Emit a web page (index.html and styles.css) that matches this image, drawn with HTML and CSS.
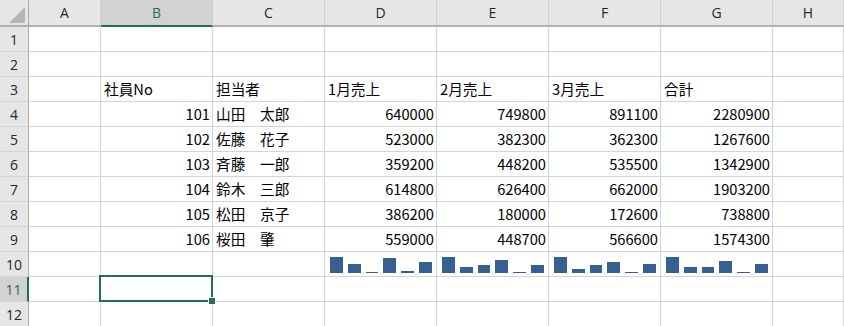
FILE: index.html
```html
<!DOCTYPE html>
<html lang="ja">
<head>
<meta charset="utf-8">
<title>Sheet</title>
<link rel="stylesheet" href="styles.css">
</head>
<body>
<div class="sheet">
  <div class="corner"><svg width="28" height="25" viewBox="0 0 28 25"><polygon points="25,7 25,23 9,23" fill="#b4b4b4"/></svg></div>
  <div class="ch">A</div><div class="ch ch-sel">B</div><div class="ch">C</div><div class="ch">D</div><div class="ch">E</div><div class="ch">F</div><div class="ch">G</div><div class="ch">H</div>

  <div class="rh">1</div><div class="c"></div><div class="c"></div><div class="c"></div><div class="c"></div><div class="c"></div><div class="c"></div><div class="c"></div><div class="c"></div>
  <div class="rh">2</div><div class="c"></div><div class="c"></div><div class="c"></div><div class="c"></div><div class="c"></div><div class="c"></div><div class="c"></div><div class="c"></div>
  <div class="rh">3</div><div class="c"></div><div class="c">社員No</div><div class="c">担当者</div><div class="c">1月売上</div><div class="c">2月売上</div><div class="c">3月売上</div><div class="c">合計</div><div class="c"></div>
  <div class="rh">4</div><div class="c"></div><div class="c num">101</div><div class="c">山田　太郎</div><div class="c num">640000</div><div class="c num">749800</div><div class="c num">891100</div><div class="c num">2280900</div><div class="c"></div>
  <div class="rh">5</div><div class="c"></div><div class="c num">102</div><div class="c">佐藤　花子</div><div class="c num">523000</div><div class="c num">382300</div><div class="c num">362300</div><div class="c num">1267600</div><div class="c"></div>
  <div class="rh">6</div><div class="c"></div><div class="c num">103</div><div class="c">斉藤　一郎</div><div class="c num">359200</div><div class="c num">448200</div><div class="c num">535500</div><div class="c num">1342900</div><div class="c"></div>
  <div class="rh">7</div><div class="c"></div><div class="c num">104</div><div class="c">鈴木　三郎</div><div class="c num">614800</div><div class="c num">626400</div><div class="c num">662000</div><div class="c num">1903200</div><div class="c"></div>
  <div class="rh">8</div><div class="c"></div><div class="c num">105</div><div class="c">松田　京子</div><div class="c num">386200</div><div class="c num">180000</div><div class="c num">172600</div><div class="c num">738800</div><div class="c"></div>
  <div class="rh">9</div><div class="c"></div><div class="c num">106</div><div class="c">桜田　肇</div><div class="c num">559000</div><div class="c num">448700</div><div class="c num">566600</div><div class="c num">1574300</div><div class="c"></div>
  <div class="rh">10</div><div class="c"></div><div class="c"></div><div class="c"></div>
  <div class="c spark"><i style="height:16px"></i><i style="height:9px"></i><i style="height:1px"></i><i style="height:15px"></i><i style="height:2px"></i><i style="height:11px"></i></div>
  <div class="c spark"><i style="height:16px"></i><i style="height:6px"></i><i style="height:8px"></i><i style="height:13px"></i><i style="height:1px"></i><i style="height:8px"></i></div>
  <div class="c spark"><i style="height:16px"></i><i style="height:4px"></i><i style="height:8px"></i><i style="height:11px"></i><i style="height:1px"></i><i style="height:9px"></i></div>
  <div class="c spark"><i style="height:16px"></i><i style="height:6px"></i><i style="height:6px"></i><i style="height:12px"></i><i style="height:1px"></i><i style="height:9px"></i></div>
  <div class="c"></div>
  <div class="rh rh-sel">11</div><div class="c"></div><div class="c active"><span class="sel-box"><span class="handle"></span></span></div><div class="c"></div><div class="c"></div><div class="c"></div><div class="c"></div><div class="c"></div><div class="c"></div>
  <div class="rh">12</div><div class="c"></div><div class="c"></div><div class="c"></div><div class="c"></div><div class="c"></div><div class="c"></div><div class="c"></div><div class="c"></div>
</div>
</body>
</html>
```
FILE: styles.css
```css
html, body {
  margin: 0;
  padding: 0;
  background: #ffffff;
}

.sheet {
  display: grid;
  grid-template-columns: 29px 72px repeat(6, 112px) 71px;
  grid-template-rows: 27px repeat(12, 25px);
  font-family: "Noto Sans CJK JP", "Noto Sans", sans-serif;
  font-size: 14.67px;
  color: #000000;
  overflow: hidden;
  height: 326px;
}

.sheet > div {
  box-sizing: border-box;
}

.corner {
  background: #e6e6e6;
  border-right: 1px solid #ababab;
  border-bottom: 2px solid #b0b0b0;
  display: flex;
}

.ch {
  background: #e6e6e6;
  border-right: 1px solid #d0d0d0;
  border-bottom: 2px solid #b0b0b0;
  display: flex;
  align-items: center;
  justify-content: center;
  font-family: "Open Sans", "Noto Sans", sans-serif;
  font-size: 14px;
  color: #262626;
  padding-bottom: 1px;
}

.ch-sel {
  background: #d2d2d2;
  color: #217346;
  border-bottom-color: #217346;
}

.rh {
  background: #e6e6e6;
  border-right: 1px solid #ababab;
  border-bottom: 1px solid #d4d4d4;
  display: flex;
  align-items: center;
  justify-content: center;
  font-family: "Open Sans", "Noto Sans", sans-serif;
  font-size: 14px;
  color: #262626;
}

.rh-sel {
  background: #d2d2d2;
  color: #217346;
  border-right: 2px solid #217346;
}

.c {
  border-right: 1px solid #d4d4d4;
  border-bottom: 1px solid #d4d4d4;
  display: flex;
  align-items: center;
  padding: 0 2px 1px 3px;
  white-space: nowrap;
}

.num {
  justify-content: flex-end;
  padding-right: 2px;
}

.spark {
  align-items: flex-end;
  gap: 5px;
  padding: 0 4px 3px 5px;
}

.spark i {
  flex: 1;
  background: #376092;
}

.active {
  position: relative;
}

.sel-box {
  position: absolute;
  left: -2px;
  top: -2px;
  width: 114px;
  height: 27px;
  box-sizing: border-box;
  border: 2px solid #217346;
}

.handle {
  position: absolute;
  right: -4px;
  bottom: -4px;
  width: 6px;
  height: 6px;
  background: #217346;
  border: 1px solid #ffffff;
  border-width: 1px 0 0 1px;
}
```
